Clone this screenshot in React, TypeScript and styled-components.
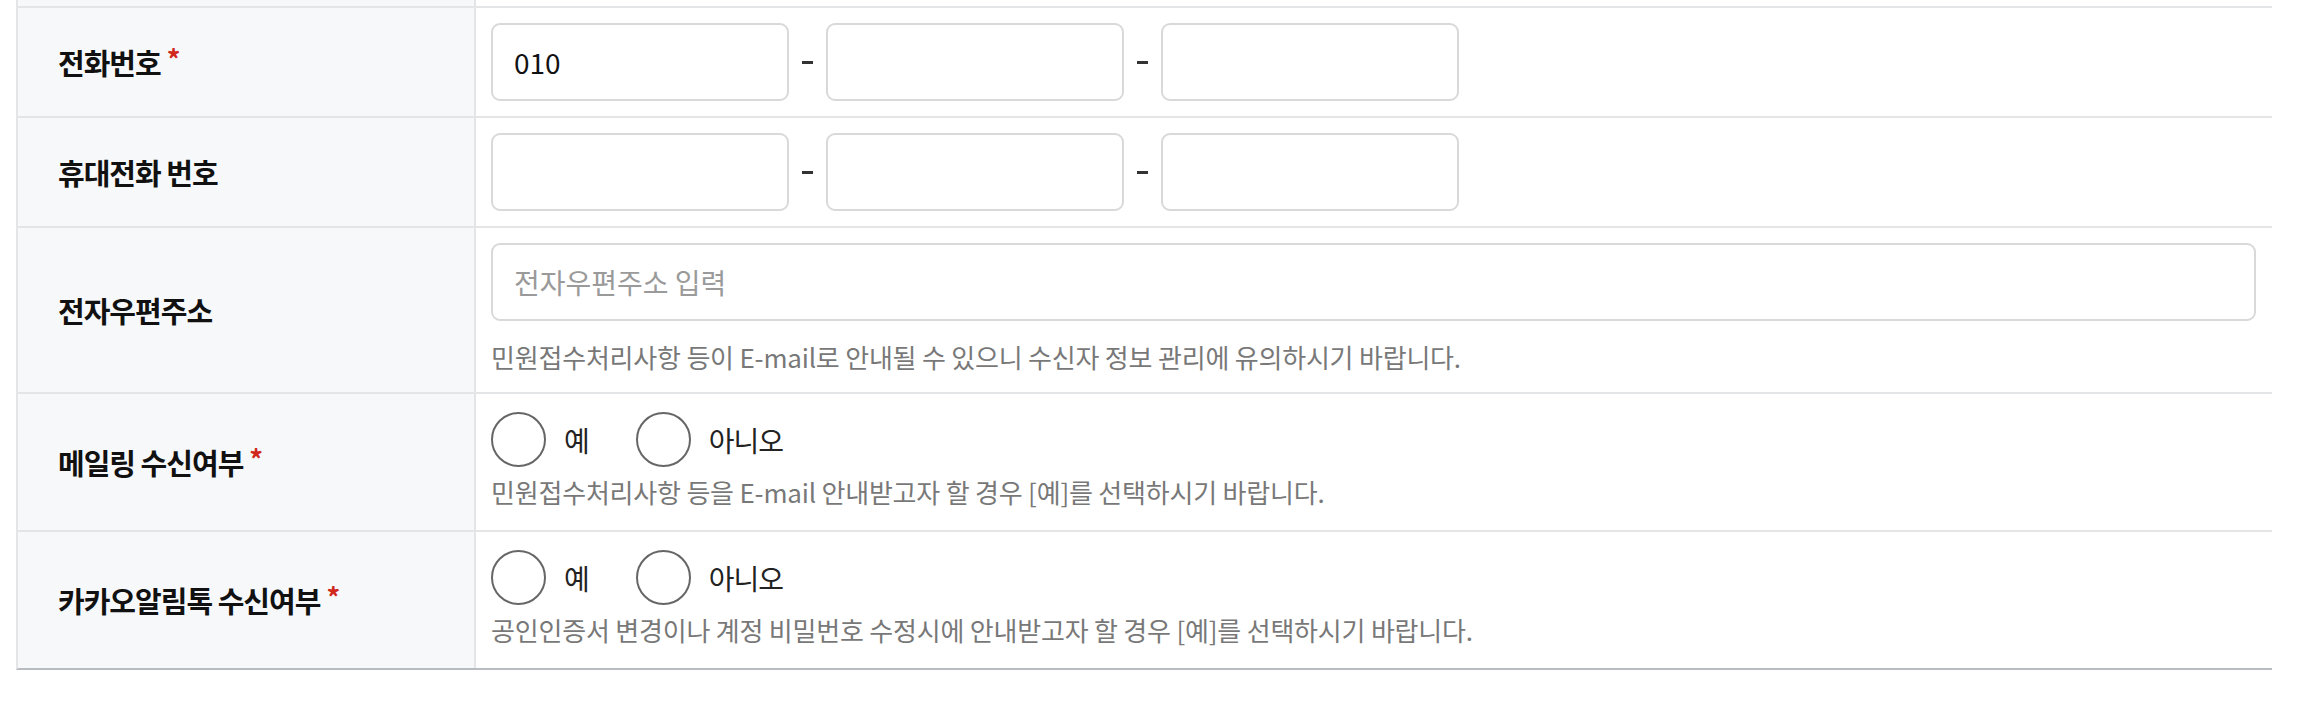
import React from 'react';
import styled, { createGlobalStyle } from 'styled-components';

const GlobalStyle = createGlobalStyle`
  html, body {
    margin: 0;
    padding: 0;
    background: #ffffff;
  }
  body {
    font-family: 'Noto Sans CJK KR', 'Noto Sans', sans-serif;
    color: #111111;
  }
`;

const Page = styled.div`
  padding: 0 32px 0 16px;
`;

const FormTable = styled.div`
  border-left: 2px solid #e4e5e7;
  border-bottom: 2px solid #b8bbc0;
`;

const Row = styled.div<{ $last?: boolean }>`
  display: grid;
  grid-template-columns: 458px 1fr;
  border-bottom: ${({ $last }) => ($last ? 'none' : '2px solid #e4e5e7')};
`;

const StubCell = styled.div<{ $label?: boolean }>`
  height: 6px;
  background: ${({ $label }) => ($label ? '#f7f8fa' : '#ffffff')};
  border-right: ${({ $label }) => ($label ? '2px solid #e4e5e7' : 'none')};
`;

const LabelCell = styled.div`
  display: flex;
  align-items: center;
  padding-left: 40px;
  background: #f7f8fa;
  border-right: 2px solid #e4e5e7;
  font-size: 29px;
  font-weight: 700;
  letter-spacing: -1px;
  color: #111111;
`;

const Required = styled.span`
  color: #d0281c;
  font-size: 27px;
  margin-left: 6px;
  position: relative;
  top: -4px;
`;

const ValueCell = styled.div<{ $pad: string }>`
  display: flex;
  flex-direction: column;
  align-items: flex-start;
  padding: ${({ $pad }) => $pad};
`;

const PhoneGroup = styled.div`
  display: flex;
  align-items: center;
`;

const TextInput = styled.input<{ $wide?: boolean }>`
  box-sizing: border-box;
  width: ${({ $wide }) => ($wide ? '100%' : '298px')};
  height: 78px;
  padding: 0 21px;
  border: 2px solid #d9d9d9;
  border-radius: 9px;
  background: #ffffff;
  font-family: 'Noto Sans CJK KR', 'Noto Sans', sans-serif;
  font-size: 28px;
  color: #111111;
  outline: none;

  &::placeholder {
    color: #9a9a9a;
  }
`;

const Dash = styled.span`
  display: block;
  width: 11px;
  height: 3px;
  margin: 0 13px;
  background: #333333;
`;

const HelpText = styled.p<{ $gap: number }>`
  margin: ${({ $gap }) => $gap}px 0 0;
  font-size: 26px;
  line-height: 36px;
  letter-spacing: -0.2px;
  color: #787878;
`;

const RadioGroup = styled.div`
  display: flex;
  align-items: center;
  height: 55px;
`;

const RadioLabel = styled.label`
  display: flex;
  align-items: center;
  margin-right: 47px;
  font-size: 28px;
  letter-spacing: -1px;
  color: #222222;
  cursor: pointer;
`;

const RadioCircle = styled.span`
  box-sizing: border-box;
  width: 55px;
  height: 55px;
  margin-right: 18px;
  border: 2px solid #666666;
  border-radius: 50%;
  background: #ffffff;
`;

const PhoneRow = ({ label, required, first }: { label: string; required?: boolean; first?: string }) => (
  <Row>
    <LabelCell>
      {label}
      {required && <Required>*</Required>}
    </LabelCell>
    <ValueCell $pad="15px 16px 15px 15px">
      <PhoneGroup>
        <TextInput defaultValue={first} />
        <Dash />
        <TextInput />
        <Dash />
        <TextInput />
      </PhoneGroup>
    </ValueCell>
  </Row>
);

const RadioRow = ({ label, help, last }: { label: string; help: string; last?: boolean }) => (
  <Row $last={last}>
    <LabelCell>
      {label}
      <Required>*</Required>
    </LabelCell>
    <ValueCell $pad="18px 16px 20px 15px">
      <RadioGroup>
        <RadioLabel>
          <RadioCircle />예
        </RadioLabel>
        <RadioLabel>
          <RadioCircle />아니오
        </RadioLabel>
      </RadioGroup>
      <HelpText $gap={7}>{help}</HelpText>
    </ValueCell>
  </Row>
);

const App: React.FC = () => (
  <Page>
    <GlobalStyle />
    <FormTable>
      <Row>
        <StubCell $label />
        <StubCell />
      </Row>
      <PhoneRow label="전화번호" required first="010" />
      <PhoneRow label="휴대전화 번호" />
      <Row>
        <LabelCell>전자우편주소</LabelCell>
        <ValueCell $pad="15px 16px 17px 15px">
          <TextInput $wide placeholder="전자우편주소 입력" />
          <HelpText $gap={18}>
            민원접수처리사항 등이 E-mail로 안내될 수 있으니 수신자 정보 관리에 유의하시기 바랍니다.
          </HelpText>
        </ValueCell>
      </Row>
      <RadioRow
        label="메일링 수신여부"
        help="민원접수처리사항 등을 E-mail 안내받고자 할 경우 [예]를 선택하시기 바랍니다."
      />
      <RadioRow
        label="카카오알림톡 수신여부"
        help="공인인증서 변경이나 계정 비밀번호 수정시에 안내받고자 할 경우 [예]를 선택하시기 바랍니다."
        last
      />
    </FormTable>
  </Page>
);

export default App;
